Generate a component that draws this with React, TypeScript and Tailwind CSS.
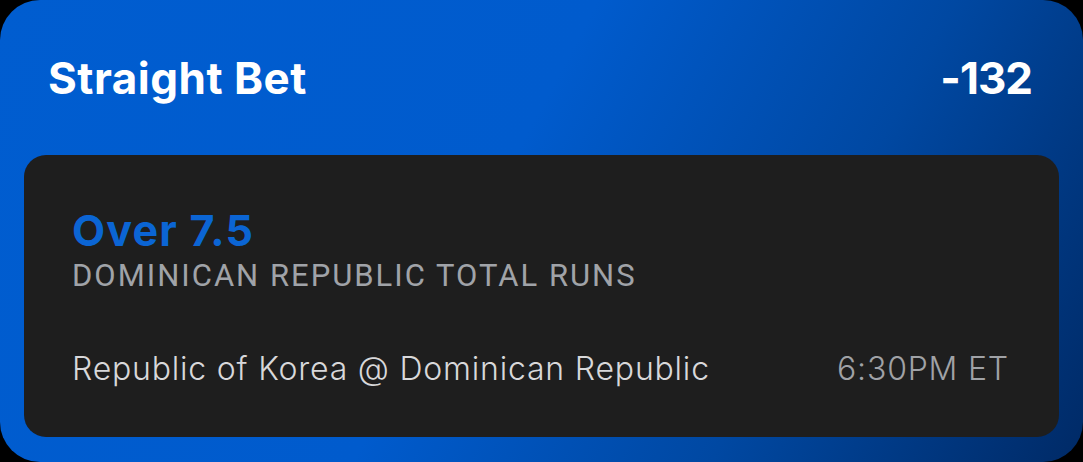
import React from 'react';

const BetCard: React.FC = () => (
  <div className="w-[1083px] h-[462px] bg-black">
    <div className="w-full h-full rounded-[40px] bg-[linear-gradient(118deg,#005dd0_0%,#005bcd_45%,#0048a2_72%,#002a66_100%)] flex flex-col">
      <div className="h-[155px] flex items-center justify-between pl-12 pr-[51px] text-white font-bold text-[44px] leading-[44px]">
        <span className="tracking-[0.5px]">Straight Bet</span>
        <span className="tracking-[-1px]">-132</span>
      </div>
      <div className="mx-6 h-[282px] rounded-[22px] bg-[#1e1e1e] pl-12 pr-[50px] pt-[54px] flex flex-col">
        <div className="text-[#0b65d4] font-bold text-[43px] leading-[43px] tracking-[1.2px]">Over 7.5</div>
        <div className="mt-[6px] text-[#a0a3a8] text-[31px] leading-[36px] tracking-[2px] font-['Roboto',sans-serif]">
          DOMINICAN REPUBLIC TOTAL RUNS
        </div>
        <div className="mt-[59px] flex items-center justify-between text-[32px] leading-[32px] font-light tracking-[0.8px]">
          <span className="text-[#d8d8da]">Republic of Korea @ Dominican Republic</span>
          <span className="text-[#a0a2a6]">6:30PM ET</span>
        </div>
      </div>
    </div>
  </div>
);

export default function App() {
  return (
    <div className="font-['Inter',sans-serif]">
      <BetCard />
    </div>
  );
}
